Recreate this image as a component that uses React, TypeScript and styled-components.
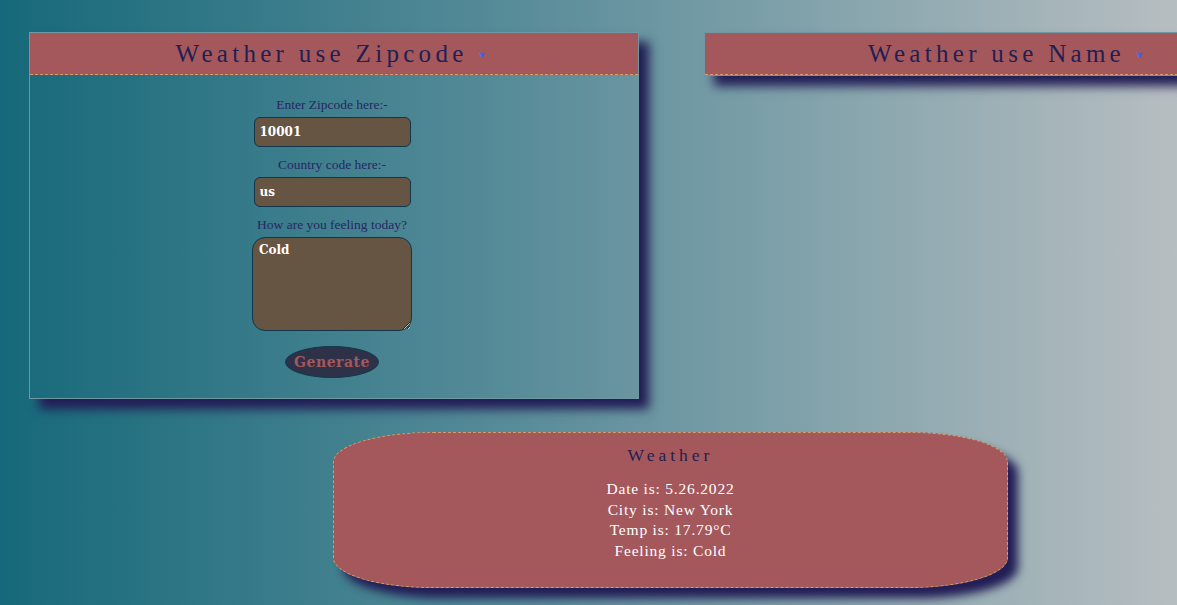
import styled, { createGlobalStyle } from "styled-components";

const GlobalStyle = createGlobalStyle`
  html, body {
    margin: 0;
    padding: 0;
    overflow: hidden;
  }
  body {
    width: 1177px;
    height: 605px;
    background: linear-gradient(to right, #16697a 0%, #5a8d9a 45%, #b7bec1 100%);
    font-family: "Liberation Serif", "DejaVu Serif", serif;
  }
`;

const Page = styled.div`
  width: 1177px;
  height: 605px;
  padding-top: 32px;
  box-sizing: border-box;
  display: flex;
  flex-direction: column;
`;

const TopRow = styled.div`
  display: flex;
  gap: 65px;
  padding-left: 29px;
  align-items: flex-start;
`;

const Card = styled.section`
  flex: 0 0 610px;
  width: 610px;
  border: 1px solid #6f98a2;
  box-sizing: border-box;
  box-shadow: 10px 10px 10px #221d55;
`;

const CardHeader = styled.div`
  height: 42px;
  background: #a4585c;
  border-bottom: 1px dashed #c9a36a;
  box-sizing: border-box;
  display: flex;
  align-items: center;
  justify-content: center;
  gap: 10px;
  padding-right: 6px;
`;

const Title = styled.h2`
  margin: 0;
  font-family: "Liberation Serif", serif;
  font-weight: normal;
  font-size: 25px;
  letter-spacing: 4.3px;
  color: #221f52;
`;

const Caret = styled.span`
  color: #3366ff;
  font-size: 9px;
  margin-top: 2px;
`;

const Form = styled.form`
  display: flex;
  flex-direction: column;
  align-items: center;
  padding: 22px 4px 20px 0;
`;

const Label = styled.label`
  font-size: 13.5px;
  color: #272764;
  margin-bottom: 4px;
`;

const Input = styled.input`
  width: 157px;
  height: 30px;
  box-sizing: border-box;
  background: #665542;
  border: 1px solid #12364a;
  border-radius: 6px;
  color: #fff;
  font-family: "DejaVu Serif", serif;
  font-weight: bold;
  font-size: 12px;
  padding: 0 5px;
  margin-bottom: 10px;
  outline: none;
`;

const TextArea = styled.textarea`
  width: 160px;
  height: 94px;
  box-sizing: border-box;
  background: #665542;
  border: 1px solid #12364a;
  border-radius: 13px;
  color: #fff;
  font-family: "DejaVu Serif", serif;
  font-weight: bold;
  font-size: 12px;
  padding: 5px 6px;
  margin-bottom: 15px;
  outline: none;
`;

const Button = styled.button`
  width: 94px;
  height: 32px;
  border-radius: 50%;
  background: #2e3249;
  border: 1px solid #14384c;
  color: #a4585c;
  font-family: "DejaVu Serif", serif;
  font-weight: bold;
  font-size: 14px;
  letter-spacing: 0.5px;
`;

const ResultRow = styled.div`
  display: flex;
  padding-left: 333px;
  margin-top: 33px;
`;

const Result = styled.div`
  width: 675px;
  height: 156px;
  box-sizing: border-box;
  background: #a4585c;
  border: 1px dashed #c9a36a;
  border-radius: 100px / 30px;
  box-shadow: 10px 10px 10px #221d55;
  display: flex;
  flex-direction: column;
  align-items: center;
  padding-top: 12px;
`;

const ResultTitle = styled.h3`
  margin: 0 0 13px;
  font-weight: normal;
  font-size: 17.5px;
  letter-spacing: 4px;
  color: #221f52;
`;

const Line = styled.div`
  color: #fff;
  font-size: 15.5px;
  line-height: 20.5px;
  letter-spacing: 0.8px;
`;

export default function App() {
  return (
    <>
      <GlobalStyle />
      <Page>
        <TopRow>
          <Card>
            <CardHeader>
              <Title>Weather use Zipcode</Title>
              <Caret>▼</Caret>
            </CardHeader>
            <Form onSubmit={(e) => e.preventDefault()}>
              <Label>Enter Zipcode here:-</Label>
              <Input defaultValue="10001" />
              <Label>Country code here:-</Label>
              <Input defaultValue="us" />
              <Label>How are you feeling today?</Label>
              <TextArea defaultValue="Cold" />
              <Button type="submit">Generate</Button>
            </Form>
          </Card>
          <Card>
            <CardHeader>
              <Title>Weather use Name</Title>
              <Caret>▼</Caret>
            </CardHeader>
          </Card>
        </TopRow>
        <ResultRow>
          <Result>
            <ResultTitle>Weather</ResultTitle>
            <Line>Date is: 5.26.2022</Line>
            <Line>City is: New York</Line>
            <Line>Temp is: 17.79°C</Line>
            <Line>Feeling is: Cold</Line>
          </Result>
        </ResultRow>
      </Page>
    </>
  );
}
